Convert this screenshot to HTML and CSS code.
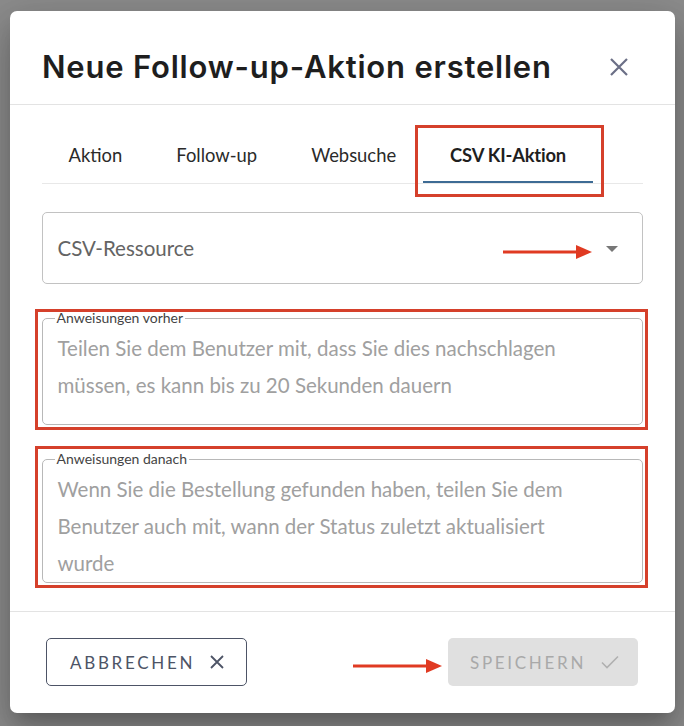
FILE: index.html
```html
<!DOCTYPE html>
<html lang="de">
<head>
<meta charset="utf-8">
<title>Neue Follow-up-Aktion erstellen</title>
<link rel="stylesheet" href="styles.css">
</head>
<body>
<div class="scrim">
  <div class="modal">
    <div class="modal-header">
      <h1 class="modal-title">Neue Follow-up-Aktion erstellen</h1>
      <svg class="close-icon" width="20" height="20" viewBox="0 0 20 20"><path d="M2 2 L18 18 M18 2 L2 18" stroke="#6b6f86" stroke-width="2.2" fill="none"/></svg>
    </div>
    <div class="modal-body">
      <div class="tabs">
        <div class="tab">Aktion</div>
        <div class="tab">Follow-up</div>
        <div class="tab">Websuche</div>
        <div class="tab tab-active">CSV KI-Aktion<span class="mark-box"></span></div>
      </div>
      <div class="select">
        <span class="select-value">CSV-Ressource</span>
        <span class="caret"></span>
        <svg class="mark-arrow select-arrow" width="90" height="16" viewBox="0 0 90 16"><path d="M0 8 H74" stroke="#e03a22" stroke-width="3"/><path d="M73 1 L89 8 L73 15 Z" fill="#e03a22"/></svg>
      </div>
      <div class="mark-wrap first">
        <fieldset class="field">
          <legend>Anweisungen vorher</legend>
          <div class="placeholder">Teilen Sie dem Benutzer mit, dass Sie dies nachschlagen müssen, es kann bis zu 20 Sekunden dauern</div>
        </fieldset>
      </div>
      <div class="mark-wrap second">
        <fieldset class="field">
          <legend>Anweisungen danach</legend>
          <div class="placeholder">Wenn Sie die Bestellung gefunden haben, teilen Sie dem Benutzer auch mit, wann der Status zuletzt aktualisiert wurde</div>
        </fieldset>
      </div>
    </div>
    <div class="modal-footer">
      <button class="btn btn-cancel">ABBRECHEN
        <svg width="14" height="14" viewBox="0 0 14 14"><path d="M1 1 L13 13 M13 1 L1 13" stroke="#4d5466" stroke-width="1.8" fill="none"/></svg>
      </button>
      <svg class="mark-arrow footer-arrow" width="90" height="16" viewBox="0 0 90 16"><path d="M0 8 H74" stroke="#e03a22" stroke-width="3"/><path d="M73 1 L89 8 L73 15 Z" fill="#e03a22"/></svg>
      <button class="btn btn-save" disabled>SPEICHERN
        <svg width="18" height="14" viewBox="0 0 18 14"><path d="M1 7.5 L6 12.5 L17 1.5" stroke="#b0b0b0" stroke-width="1.6" fill="none"/></svg>
      </button>
    </div>
  </div>
</div>
</body>
</html>
```
FILE: styles.css
```css
* { box-sizing: border-box; }
html, body { margin: 0; padding: 0; }
body {
  width: 684px;
  height: 726px;
  overflow: hidden;
  background: #8c8c8c;
  font-family: "Lato", "Noto Sans", sans-serif;
}
.scrim {
  padding: 11px 0 0 9.5px;
  height: 726px;
}
.modal {
  width: 665px;
  height: 702px;
  background: #fff;
  border-radius: 7px;
  display: flex;
  flex-direction: column;
  box-shadow: 0 11px 15px -7px rgba(0,0,0,.2), 0 24px 38px 3px rgba(0,0,0,.14), 0 9px 46px 8px rgba(0,0,0,.12);
}
.modal-header {
  height: 94px;
  padding: 19px 46px 0 32.5px;
  display: flex;
  align-items: center;
  justify-content: space-between;
  border-bottom: 1px solid #e3e3e3;
}
.modal-title {
  margin: 0;
  font-family: "Inter", "Noto Sans", sans-serif;
  font-weight: 600;
  font-size: 31px;
  line-height: 36px;
  color: #1e1e1e;
  letter-spacing: 0.8px;
}
.close-icon { display: block; margin-top: -1px; }
.modal-body {
  flex: 1;
  padding: 0 31.5px 0 32px;
}
.tabs {
  margin-top: 22px;
  height: 57px;
  display: flex;
  border-bottom: 1px solid #e8e8e8;
}
.tab {
  position: relative;
  padding: 0 27px;
  height: 56px;
  line-height: 56px;
  font-size: 18.4px;
  color: #2a2a2a;
  white-space: nowrap;
}
.tab-active {
  font-weight: 700;
  color: #1f1f1f;
  letter-spacing: -0.2px;
}
.tab-active::after {
  content: "";
  position: absolute;
  left: 0;
  right: 0;
  bottom: 0;
  height: 2px;
  background: #3d6b94;
}
.mark-box {
  position: absolute;
  left: -8px;
  right: -11px;
  top: -2px;
  bottom: -14px;
  border: 3px solid #d5402b;
}
.select {
  position: relative;
  margin-top: 28px;
  height: 72px;
  border: 1px solid #c2c2c2;
  border-radius: 5px;
  display: flex;
  align-items: center;
  justify-content: space-between;
  padding: 0 24px 0 15px;
}
.select-value {
  font-size: 20.5px;
  color: #646464;
}
.caret {
  width: 0;
  height: 0;
  border-left: 6px solid transparent;
  border-right: 6px solid transparent;
  border-top: 6px solid #777;
  margin-top: 2px;
}
.mark-arrow { position: absolute; display: block; }
.select-arrow { left: 460px; top: 31px; }
.mark-wrap {
  margin: 0 -5px 0 -6.5px;
  border: 3px solid #d5402b;
  padding: 0 2px 2px 3.5px;
}
.mark-wrap.first { margin-top: 25px; }
.mark-wrap.second { margin-top: 16px; padding-top: 4px; padding-bottom: 2px; }
.field {
  margin: 0;
  border: 1px solid #b8b8b8;
  border-radius: 5px;
  padding: 0 55px 0 15px;
}
.field legend {
  font-size: 14px;
  line-height: 12px;
  color: #444;
  padding: 0 2px;
  margin-left: -3px;
}
.placeholder {
  font-size: 20.5px;
  line-height: 37px;
  color: #a0a0a0;
  margin-top: 6px;
}
.first .placeholder { padding-bottom: 20px; }
.second .placeholder { padding-bottom: 0; }
.modal-footer {
  position: relative;
  border-top: 1px solid #e3e3e3;
  padding: 26px 36.5px 27px 36.5px;
  display: flex;
  justify-content: space-between;
  align-items: center;
}
.btn {
  height: 48px;
  border-radius: 5px;
  font-family: "Lato", "Noto Sans", sans-serif;
  font-size: 17px;
  letter-spacing: 2.7px;
  display: flex;
  align-items: center;
  gap: 15px;
  padding: 0;
}
.btn-cancel {
  width: 201px;
  padding-left: 23px;
  background: #fff;
  border: 1px solid #4d5466;
  color: #4d5466;
}
.btn-save {
  width: 190px;
  padding-left: 22px;
  background: #e0e0e0;
  border: none;
  color: #a9a9a9;
}
.footer-arrow { left: 343px; top: 46px; }
```
